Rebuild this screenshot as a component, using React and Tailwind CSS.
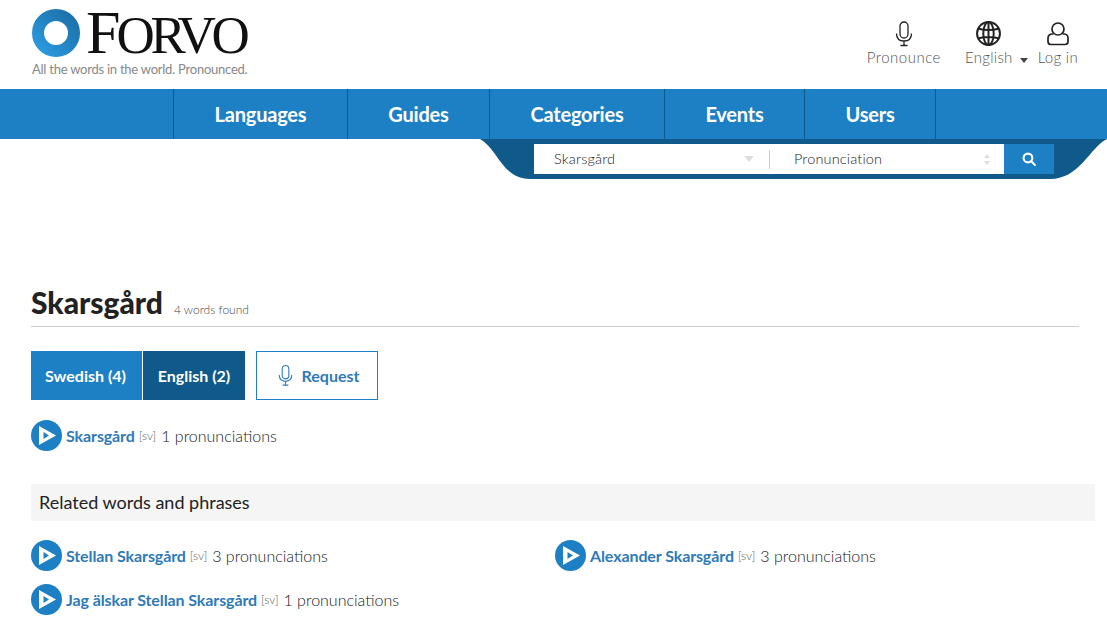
import React from "react";

function Mic({ className, stroke = "#222" }) {
  return (
    <svg viewBox="0 0 18 26" className={className} fill="none" stroke={stroke} strokeWidth="1.300">
      <rect x="5" y="1" width="8" height="16" rx="4" />
      <path d="M1.500 12.500c0 5 3 7.500 7.500 7.500s7.500-2.500 7.500-7.500M9 20v4M5.500 24.500h7" />
    </svg>
  );
}

function PlayBtn() {
  return (
    <svg viewBox="0 0 32 32" className="w-[32px] h-[32px] shrink-0">
      <circle cx="15.500" cy="15.500" r="15.500" fill="#1e80c4" />
      <path d="M8 6 25 15.500 8 25Z" fill="#fff" />
      <path d="M12.500 12 18 15.500 12.500 19Z" fill="#1e80c4" />
    </svg>
  );
}

function Word({ name, count }) {
  return (
    <div className="flex items-center h-[32px]">
      <PlayBtn />
      <a className="ml-[3px] font-bold text-[#2f7ab8] text-[16px] tracking-[-0.1px]">{name}</a>
      <span className="ml-[4px] text-[12px] font-light text-[#555]">[sv]</span>
      <span className="ml-[5px] text-[16px] font-light text-[#222]">{count} pronunciations</span>
    </div>
  );
}

const navItems = [
  { label: "Languages", w: "w-[175px]" },
  { label: "Guides", w: "w-[142px]" },
  { label: "Categories", w: "w-[175px]" },
  { label: "Events", w: "w-[140px]" },
  { label: "Users", w: "w-[131px]" },
];

export default function App() {
  return (
    <div className="w-[1107px] h-[622px] overflow-hidden bg-white font-['Lato','sans-serif'] text-[#222]">
      {/* Header */}
      <header className="h-[89px] flex justify-between pl-[32px] pr-[29px]">
        <div className="pt-[2px]">
          <div className="flex items-center h-[62px]">
            <svg viewBox="0 0 48 48" className="w-[48px] h-[48px]">
              <defs>
                <linearGradient id="ring" x1="0" y1="1" x2="1" y2="0">
                  <stop offset="0" stopColor="#2b9ade" />
                  <stop offset="1" stopColor="#1c6fa8" />
                </linearGradient>
              </defs>
              <circle cx="24" cy="24" r="18" fill="none" stroke="url(#ring)" strokeWidth="12" />
            </svg>
            <span className="ml-[6px] font-['Liberation_Serif','serif'] text-[#111] text-[62px] leading-[62px] whitespace-nowrap">
              F<span className="-ml-[4px] text-[53px] tracking-[-4.200px]">ORVO</span>
            </span>
          </div>
          <div className="-mt-[3px] text-[13px] leading-[16px] text-[#888] tracking-[-0.24px]">All the words in the world. Pronounced.</div>
        </div>
        <nav className="flex pt-[21px] text-[15px] leading-[20px] font-light tracking-[0.3px] text-[#555]">
          <div className="flex flex-col items-center">
            <Mic className="w-[18px] h-[26px]" />
            <span className="tracking-[0.5px]">Pronounce</span>
          </div>
          <div className="relative flex flex-col items-center ml-[24px]">
            <svg viewBox="0 0 24 24" className="w-[25px] h-[25px]" fill="none" stroke="#222" strokeWidth="1.900">
              <circle cx="12" cy="12" r="11" />
              <ellipse cx="12" cy="12" rx="5" ry="11" />
              <path d="M12 1v22M2.500 7.500Q12 10 21.500 7.500M2.500 16.500Q12 14 21.500 16.500" />
            </svg>
            <span className="mt-px">English</span>
            <span className="absolute right-[-15px] top-[37px] w-0 h-0 border-x-[4px] border-x-transparent border-t-[5px] border-t-[#444]" />
          </div>
          <div className="flex flex-col items-center ml-[25px]">
            <svg viewBox="0 0 22 24" className="w-[22px] h-[25px]" fill="none" stroke="#222" strokeWidth="1.700">
              <circle cx="11" cy="7.500" r="6" />
              <path d="M6.500 12.500H5a4 4 0 0 0-4 4V20a3 3 0 0 0 3 3h14a3 3 0 0 0 3-3v-3.500a4 4 0 0 0-4-4h-1.500" />
            </svg>
            <span className="mt-px">Log in</span>
          </div>
        </nav>
      </header>

      {/* Main nav */}
      <div className="h-[50px] bg-[#1e80c4] pl-[173px] flex">
        {navItems.map((item, i) => (
          <a
            key={item.label}
            className={`${item.w} flex items-center justify-center border-r border-[#0f5a8c] text-white font-bold text-[20px] tracking-[-0.2px] ${i === 0 ? "border-l" : ""}`}
          >
            {item.label}
          </a>
        ))}
      </div>

      {/* Search tab */}
      <div className="relative h-[40px]">
        <svg viewBox="0 0 627 40" className="absolute left-[480px] top-0 w-[627px] h-[40px]">
          <path d="M0 0H627C610 8 600 40 570 40H50C22 40 18 10 0 0Z" fill="#0f5a8a" />
        </svg>
        <div className="absolute left-[534px] top-[5px] w-[520px] h-[30px] flex text-[14.500px] font-light tracking-[0.15px] text-[#222]">
          <div className="w-[235px] bg-white flex items-center justify-between pl-[20px] pr-[15px]">
            <span>Skarsgård</span>
            <span className="w-0 h-0 border-x-[5px] border-x-transparent border-t-[6px] border-t-[#ddd]" />
          </div>
          <div className="w-[235px] bg-white flex items-center">
            <span className="h-[19px] border-l border-[#ccc]" />
            <span className="ml-[24px] flex-1">Pronunciation</span>
            <span className="mr-[14px] flex flex-col gap-[3px]">
              <span className="w-0 h-0 border-x-[3px] border-x-transparent border-b-[4px] border-b-[#ddd]" />
              <span className="w-0 h-0 border-x-[3px] border-x-transparent border-t-[4px] border-t-[#ddd]" />
            </span>
          </div>
          <div className="w-[50px] bg-[#1e80c4] flex items-center justify-center">
            <svg viewBox="0 0 16 16" className="w-[14px] h-[14px]" fill="none" stroke="#fff" strokeWidth="2.400">
              <circle cx="6.800" cy="6.800" r="5" />
              <path d="M10.500 10.500 15 15" strokeLinecap="round" />
            </svg>
          </div>
        </div>
      </div>

      {/* Content */}
      <main className="pl-[31px] pt-[106px]">
        <div className="w-[1048px] h-[42px] border-b border-[#ccc] flex items-start">
          <h1 className="font-black text-[30px] leading-[36px] text-[#222] -mt-px">Skarsgård</h1>
          <span className="ml-[11px] mt-[17px] text-[12px] leading-[16px] font-light text-[#444]">4 words found</span>
        </div>

        <div className="mt-[24px] flex h-[49px] text-[16px] font-bold">
          <a className="w-[111px] pr-[2px] bg-[#1e80c4] text-white flex items-center justify-center">Swedish (4)</a>
          <a className="ml-px w-[102px] bg-[#0f5a8a] text-white flex items-center justify-center">English (2)</a>
          <a className="ml-[11px] w-[122px] pl-[3px] border border-[#1e80c4] text-[#2f7ab8] flex items-center justify-center">
            <Mic className="w-[15px] h-[23px] mr-[9px]" stroke="#2f7ab8" />
            Request
          </a>
        </div>

        <div className="mt-[20px]">
          <Word name="Skarsgård" count="1" />
        </div>

        <h2 className="mt-[32px] w-[1064px] h-[37px] bg-[#f5f5f5] pl-[8px] flex items-center text-[18px] text-[#222]">
          Related words and phrases
        </h2>

        <div className="mt-[19px] grid grid-cols-[524px_1fr] gap-y-[12px]">
          <Word name="Stellan Skarsgård" count="3" />
          <Word name="Alexander Skarsgård" count="3" />
          <Word name="Jag älskar Stellan Skarsgård" count="1" />
        </div>
      </main>
    </div>
  );
}
